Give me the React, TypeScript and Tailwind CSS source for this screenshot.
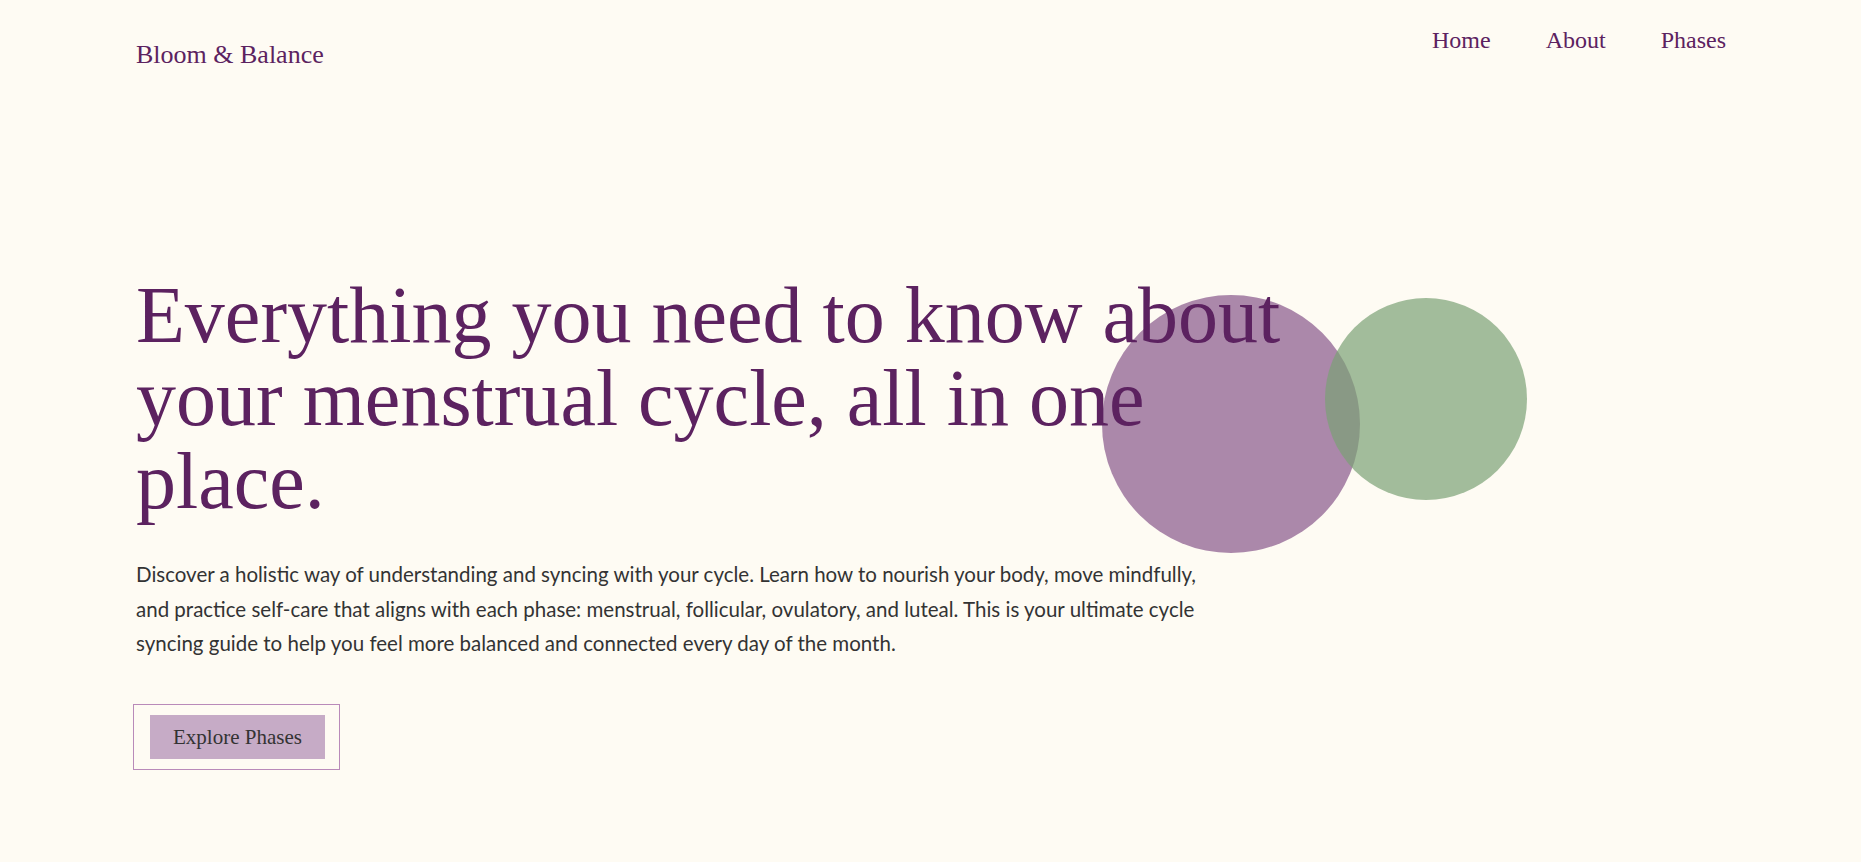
import React from "react";

const serif = { fontFamily: '"Liberation Serif", "DejaVu Serif", serif' };

export default function App() {
  return (
    <div className="min-h-screen w-full bg-[#fefbf3] overflow-hidden" style={{ minHeight: 862 }}>
      <header className="flex items-start justify-between pl-[136px] pr-[135px]">
        <div
          className="mt-[39px] text-[26px] leading-[32px] text-[#5c2260]"
          style={serif}
        >
          Bloom &amp; Balance
        </div>
        <nav
          className="mt-[25px] flex gap-[55px] text-[24px] leading-[30px] text-[#5c2260]"
          style={serif}
        >
          <a href="#">Home</a>
          <a href="#">About</a>
          <a href="#">Phases</a>
        </nav>
      </header>

      <main className="relative pl-[136px] pt-[203px]">
        <div className="absolute left-[1102px] top-[224px] h-[258px] w-[258px] rounded-full bg-[#ab88aa]" />
        <div className="absolute left-[1325px] top-[227px] h-[202px] w-[202px] rounded-full bg-[#7ba175] opacity-70" />

        <div className="relative">
          <h1
            className="text-[80px] leading-[83px] text-[#5c2260] whitespace-nowrap"
            style={serif}
          >
            Everything you need to know about
            <br />
            your menstrual cycle, all in one
            <br />
            place.
          </h1>
          <p
            className="mt-[34px] text-[20.5px] leading-[34.5px] text-[#333333] whitespace-nowrap"
            style={{ fontFamily: 'Lato, "Open Sans", sans-serif' }}
          >
            Discover a holistic way of understanding and syncing with your cycle. Learn how to nourish your body, move mindfully,
            <br />
            and practice self-care that aligns with each phase: menstrual, follicular, ovulatory, and luteal. This is your ultimate cycle
            <br />
            syncing guide to help you feel more balanced and connected every day of the month.
          </p>
          <div className="mt-[43px] -ml-[3px] inline-block border border-[#b98ab9] pl-[16px] pr-[14px] pt-[10px] pb-[10px]">
            <button
              className="block bg-[#c6abc6] px-[23px] py-[10px] text-[21px] leading-[24px] text-[#333333]"
              style={serif}
            >
              Explore Phases
            </button>
          </div>
        </div>
      </main>
    </div>
  );
}
